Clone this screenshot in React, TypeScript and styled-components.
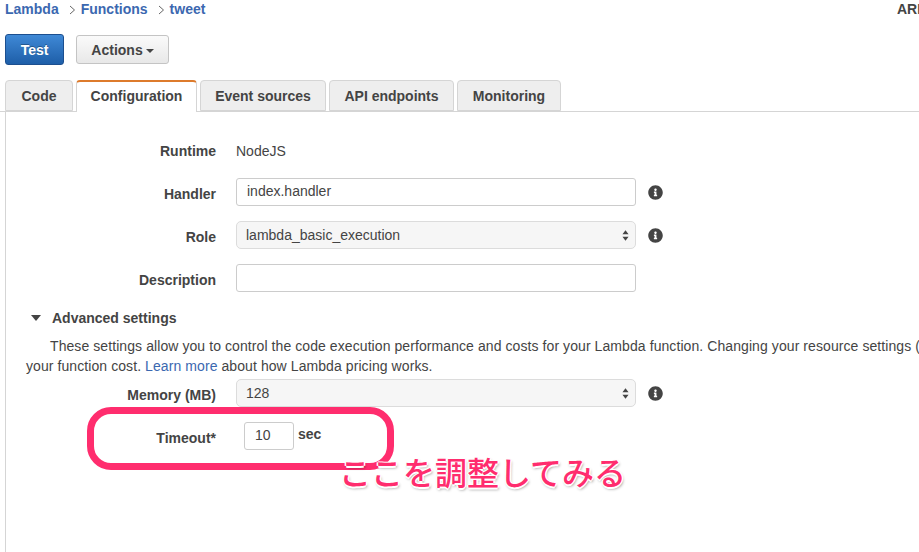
import React from 'react';
import styled, { createGlobalStyle } from 'styled-components';
import { FaInfoCircle } from 'react-icons/fa';

const GlobalStyle = createGlobalStyle`
  html, body {
    margin: 0;
    padding: 0;
    background: #fff;
  }
  body {
    font-family: 'Liberation Sans', Arial, sans-serif;
    font-size: 14px;
    color: #444;
  }
`;

const TABS = [
  { name: 'Code', width: 68 },
  { name: 'Configuration', width: 121 },
  { name: 'Event sources', width: 126 },
  { name: 'API endpoints', width: 125 },
  { name: 'Monitoring', width: 104 }
];

function InfoIcon() {
  return (
    <InfoWrap>
      <FaInfoCircle size={15} />
    </InfoWrap>
  );
}

function Arrows() {
  return (
    <svg width="7" height="13" viewBox="0 0 8 14">
      <path d="M4 1 L7.5 5.6 H0.5 Z M4 13 L7.5 8.4 H0.5 Z" fill="#444" />
    </svg>
  );
}

function ChevronIcon() {
  return (
    <Chevron>
      <svg width="7" height="10" viewBox="0 0 7 10">
        <path d="M1 1 L5.5 5 L1 9" fill="none" stroke="#666" strokeWidth="1" />
      </svg>
    </Chevron>
  );
}

export default function App() {
  return (
    <Page>
      <GlobalStyle />
      <TopBar>
        <Breadcrumbs>
          <Crumb>Lambda</Crumb>
          <ChevronIcon />
          <Crumb>Functions</Crumb>
          <ChevronIcon />
          <Crumb>tweet</Crumb>
        </Breadcrumbs>
        <Arn>ARN</Arn>
      </TopBar>

      <Toolbar>
        <PrimaryButton>Test</PrimaryButton>
        <DefaultButton>
          Actions
          <Caret />
        </DefaultButton>
      </Toolbar>

      <TabBar>
        {TABS.map((tab) => (
          <Tab key={tab.name} $width={tab.width} $active={tab.name === 'Configuration'}>
            {tab.name}
          </Tab>
        ))}
      </TabBar>

      <Panel>
        <ReadonlyRow>
          <Label>Runtime</Label>
          <Plain>NodeJS</Plain>
        </ReadonlyRow>
        <FormRow>
          <Label>Handler</Label>
          <TextBox>index.handler</TextBox>
          <InfoIcon />
        </FormRow>
        <FormRow>
          <Label>Role</Label>
          <SelectBox>
            lambda_basic_execution
            <Arrows />
          </SelectBox>
          <InfoIcon />
        </FormRow>
        <FormRow>
          <Label>Description</Label>
          <TextBox />
        </FormRow>

        <AdvancedHeader>
          <DownCaret />
          Advanced settings
        </AdvancedHeader>
        <Intro>
          <IntroFirst>
            These settings allow you to control the code execution performance and costs for your
            Lambda function. Changing your resource settings (
          </IntroFirst>
          <IntroLine>
            your function cost. <IntroLink>Learn more</IntroLink> about how Lambda pricing works.
          </IntroLine>
        </Intro>

        <FormRow>
          <Label>Memory (MB)</Label>
          <SelectBox>
            128
            <Arrows />
          </SelectBox>
          <InfoIcon />
        </FormRow>
        <FormRow>
          <Label>Timeout*</Label>
          <TimeoutCell>
            <SmallBox>10</SmallBox>
            <Unit>sec</Unit>
          </TimeoutCell>
        </FormRow>
      </Panel>

      <Highlight />
      <Note>ここを調整してみる</Note>
    </Page>
  );
}

const Page = styled.div`
  position: relative;
  width: 919px;
  height: 552px;
  overflow: hidden;
  background: #fff;
`;

const TopBar = styled.div`
  display: flex;
  justify-content: space-between;
  height: 18px;
  padding-left: 5px;
`;

const Breadcrumbs = styled.div`
  display: flex;
  align-items: center;
`;

const Crumb = styled.a`
  font-weight: 700;
  font-size: 14px;
  color: #3b68b0;
`;

const Chevron = styled.span`
  display: flex;
  margin: 2px 5px 0 10px;
`;

const Arn = styled.div`
  width: 22px;
  overflow: hidden;
  font-weight: 700;
  font-size: 14px;
  line-height: 18px;
  color: #444;
`;

const Toolbar = styled.div`
  display: flex;
  align-items: center;
  gap: 12px;
  height: 31px;
  margin-top: 16px;
  padding-left: 5px;
`;

const PrimaryButton = styled.button`
  width: 59px;
  height: 31px;
  padding: 0;
  border: 1px solid #1c4f8f;
  border-radius: 3px;
  background: linear-gradient(#3f89d6, #1e5ea8);
  font: 700 14px 'Liberation Sans', Arial, sans-serif;
  color: #fff;
  text-shadow: 0 -1px 0 rgba(0, 0, 0, 0.3);
`;

const DefaultButton = styled.button`
  display: flex;
  align-items: center;
  justify-content: center;
  gap: 3px;
  width: 93px;
  height: 29px;
  padding: 0;
  border: 1px solid #c4c4c4;
  border-radius: 3px;
  background: linear-gradient(#fafafa, #e8e8e8);
  font: 700 14px 'Liberation Sans', Arial, sans-serif;
  color: #444;
`;

const Caret = styled.span`
  width: 0;
  height: 0;
  margin-top: 3px;
  border-left: 4.5px solid transparent;
  border-right: 4.5px solid transparent;
  border-top: 4.5px solid #444;
`;

const TabBar = styled.div`
  display: flex;
  align-items: flex-end;
  gap: 3px;
  height: 31px;
  margin-top: 15px;
  padding-left: 5px;
  border-bottom: 1px solid #d5d5d5;
`;

const Tab = styled.div<{ $active?: boolean; $width: number }>`
  box-sizing: border-box;
  width: ${(p) => p.$width}px;
  height: ${(p) => (p.$active ? '32px' : '31px')};
  margin-bottom: ${(p) => (p.$active ? '-1px' : '0')};
  border: 1px solid #d5d5d5;
  border-bottom: ${(p) => (p.$active ? 'none' : '1px solid #d5d5d5')};
  border-top: ${(p) => (p.$active ? '2px solid #dd7b2c' : '1px solid #d5d5d5')};
  border-radius: 4px 4px 0 0;
  background: ${(p) => (p.$active ? '#fff' : '#eee')};
  font-weight: 700;
  font-size: 14px;
  line-height: ${(p) => (p.$active ? '29px' : '30px')};
  text-align: center;
  color: #444;
`;

const Panel = styled.div`
  box-sizing: border-box;
  height: 441px;
  margin-left: 5px;
  padding-top: 25px;
  border-left: 1px solid #d5d5d5;
`;

const Label = styled.label`
  margin-top: 3px;
  font-weight: 700;
  font-size: 14px;
  text-align: right;
  color: #444;
`;

const FormRow = styled.div`
  display: grid;
  grid-template-columns: 210px 400px 40px;
  column-gap: 20px;
  align-items: center;
  height: 28px;
  margin-bottom: 15px;
`;

const ReadonlyRow = styled(FormRow)`
  margin-bottom: 13px;

  ${Label} {
    margin-top: 0;
  }
`;

const Plain = styled.div`
  font-size: 14px;
  color: #444;
`;

const TextBox = styled.div`
  box-sizing: border-box;
  width: 400px;
  height: 28px;
  padding-left: 10px;
  border: 1px solid #ccc;
  border-radius: 3px;
  background: #fff;
  font-size: 14px;
  line-height: 25px;
  color: #444;
`;

const SelectBox = styled.div`
  box-sizing: border-box;
  display: flex;
  align-items: center;
  justify-content: space-between;
  width: 400px;
  height: 28px;
  padding: 0 6px 0 9px;
  border: 1px solid #dcdcdc;
  border-radius: 5px;
  background: #f6f6f6;
  font-size: 14px;
  color: #444;
`;

const InfoWrap = styled.span`
  display: flex;
  margin-left: -8px;
  color: #444;
`;

const AdvancedHeader = styled.div`
  display: flex;
  align-items: center;
  gap: 10px;
  height: 18px;
  margin-top: 17px;
  padding-left: 25px;
  font-weight: 700;
  font-size: 14px;
  color: #444;
`;

const DownCaret = styled.span`
  width: 0;
  height: 0;
  margin-right: 1px;
  border-left: 5.5px solid transparent;
  border-right: 5.5px solid transparent;
  border-top: 6px solid #444;
`;

const Intro = styled.div`
  height: 40px;
  margin: 9px 0 3px;
  padding-left: 20px;
  font-size: 14px;
  line-height: 20px;
  letter-spacing: 0.08px;
  white-space: nowrap;
  color: #444;
`;

const IntroLine = styled.div``;

const IntroFirst = styled(IntroLine)`
  padding-left: 24px;
`;

const IntroLink = styled.a`
  color: #3b68b0;
`;

const TimeoutCell = styled.div`
  display: flex;
  align-items: flex-start;
  gap: 4px;
  padding-left: 8px;
`;

const SmallBox = styled(TextBox)`
  width: 50px;
`;

const Unit = styled.span`
  margin-top: 4px;
  font-weight: 700;
  font-size: 14px;
  color: #444;
`;

const Highlight = styled.div`
  position: absolute;
  left: 87px;
  top: 407px;
  box-sizing: border-box;
  width: 307px;
  height: 63px;
  border: 7px solid #ff2d6e;
  border-radius: 24px;
`;

const Note = styled.div`
  position: absolute;
  left: 339px;
  top: 451px;
  font-family: 'Noto Sans CJK JP', sans-serif;
  font-size: 32px;
  font-weight: 500;
  line-height: 40px;
  white-space: nowrap;
  color: #ff2d6e;
  text-shadow: -1.5px 0 0 #fff, 1.5px 0 0 #fff, 0 -1.5px 0 #fff, 0 1.5px 0 #fff, 1px 2px 3px rgba(0, 0, 0, 0.45);
`;
